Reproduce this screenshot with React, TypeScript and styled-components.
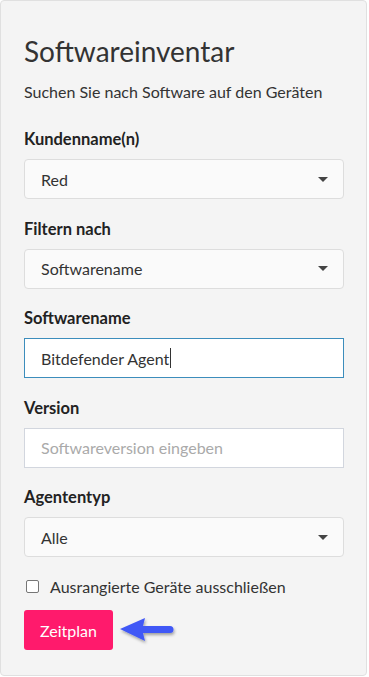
import React from 'react';
import styled, { createGlobalStyle } from 'styled-components';

// Global reset: no body margin, one sans-serif stack for the whole page.
const GlobalStyle = createGlobalStyle`
  html, body {
    margin: 0;
    padding: 0;
    background: #ffffff;
  }
  body {
    font-family: Lato, "Liberation Sans", sans-serif;
    color: #333333;
  }
  * {
    box-sizing: border-box;
  }
`;

// Grey card holding the whole form.
const Card = styled.div`
  width: 367px;
  height: 676px;
  background-color: #f4f4f4;
  border: 1px solid #e0e0e0;
  border-radius: 4px;
  padding: 30px 22px 0 23px;
  display: flex;
  flex-direction: column;
`;

const Title = styled.h1`
  font-size: 28px;
  font-weight: 400;
  margin: 0;
  line-height: 40px;
  color: #333333;
`;

const Subtitle = styled.p`
  font-size: 16px;
  margin: 10px 0 0;
  line-height: 22px;
  color: #333333;
`;

const Form = styled.div`
  display: flex;
  flex-direction: column;
  gap: 19.5px;
  margin-top: 26px;
`;

// A label and its control.
const Field = styled.div`
  display: flex;
  flex-direction: column;
  gap: 9px;
`;

const Label = styled.label`
  font-size: 16.5px;
  font-weight: 700;
  line-height: 21px;
  color: #222222;
`;

// Select-like box with a caret on the right.
const SelectBox = styled.div`
  height: 40px;
  background-color: #fafafa;
  border: 1px solid #dddddd;
  border-radius: 4px;
  padding: 0 15px 0 16px;
  display: flex;
  align-items: center;
  justify-content: space-between;
  font-size: 16px;
  color: #333333;
`;

const Caret = styled.span`
  width: 0;
  height: 0;
  border-left: 5px solid transparent;
  border-right: 5px solid transparent;
  border-top: 5px solid #444444;
`;

const TextInput = styled.div<{ $focused?: boolean }>`
  height: 40px;
  background-color: #ffffff;
  border: 1px solid ${(p) => (p.$focused ? '#3c8dbc' : '#d2d6de')};
  padding: 0 16px;
  display: flex;
  align-items: center;
  font-size: 16px;
  color: ${(p) => (p.$focused ? '#333333' : '#aaaaaa')};
`;

const Cursor = styled.span`
  display: inline-block;
  width: 1px;
  height: 20px;
  background: #333333;
  margin-left: 1px;
`;

const CheckRow = styled.label`
  display: flex;
  align-items: center;
  gap: 11px;
  margin-top: 20px;
  font-size: 16px;
  color: #333333;
`;

const CheckBox = styled.span`
  width: 13px;
  height: 13px;
  border: 1px solid #767676;
  border-radius: 2px;
  background: #ffffff;
  margin-left: 2px;
`;

const ActionRow = styled.div`
  display: flex;
  align-items: center;
  gap: 6px;
  margin-top: 14px;
`;

const Button = styled.button`
  height: 40px;
  padding: 0 16px;
  background-color: #ff1a6c;
  border: none;
  border-radius: 3px;
  color: #ffffff;
  font-family: inherit;
  font-size: 16px;
  cursor: pointer;
`;

const Arrow = () => (
  <svg width="58" height="32" viewBox="0 0 58 32">
    <defs>
      <filter id="sh" x="-20%" y="-20%" width="150%" height="160%">
        <feDropShadow dx="1" dy="2" stdDeviation="1.5" floodColor="#000" floodOpacity="0.35" />
      </filter>
    </defs>
    <g filter="url(#sh)">
      <path d="M1 15 L26 4 L24 12 L51 12 a3.5 3.5 0 0 1 0 7 L24 19 L26 27 Z" fill="#4158f6" />
    </g>
  </svg>
);

const selects = [
  { label: 'Kundenname(n)', value: 'Red' },
  { label: 'Filtern nach', value: 'Softwarename' },
];

export default function App() {
  return (
    <>
      <GlobalStyle />
      <Card>
        <Title>Softwareinventar</Title>
        <Subtitle>Suchen Sie nach Software auf den Geräten</Subtitle>
        <Form>
          {selects.map((s) => (
            <Field key={s.label}>
              <Label>{s.label}</Label>
              <SelectBox>
                {s.value}
                <Caret />
              </SelectBox>
            </Field>
          ))}
          <Field>
            <Label>Softwarename</Label>
            <TextInput $focused>
              Bitdefender Agent
              <Cursor />
            </TextInput>
          </Field>
          <Field>
            <Label>Version</Label>
            <TextInput>Softwareversion eingeben</TextInput>
          </Field>
          <Field>
            <Label>Agententyp</Label>
            <SelectBox>
              Alle
              <Caret />
            </SelectBox>
          </Field>
        </Form>
        <CheckRow>
          <CheckBox />
          Ausrangierte Geräte ausschließen
        </CheckRow>
        <ActionRow>
          <Button>Zeitplan</Button>
          <Arrow />
        </ActionRow>
      </Card>
    </>
  );
}
